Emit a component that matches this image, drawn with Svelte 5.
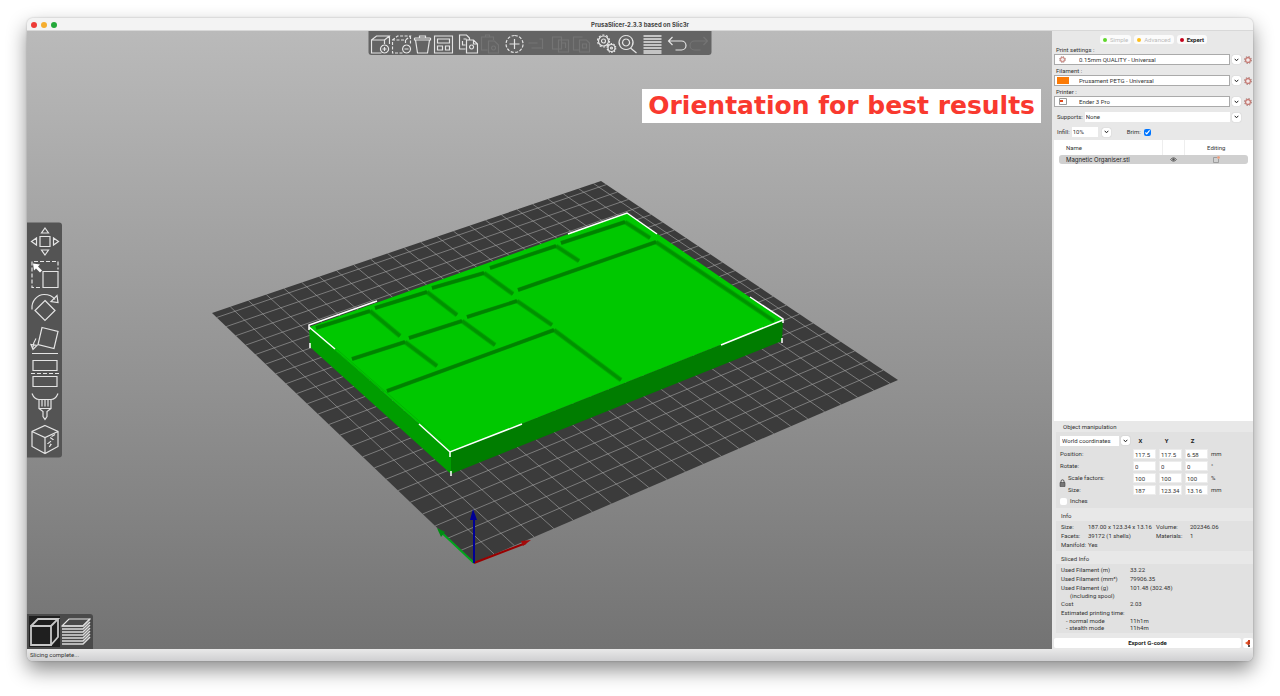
<script>
  const bed = [[474, 563], [898, 380], [601, 181], [212, 313]];

  // Projects a point of the unit square onto a quad seen in perspective.
  function projector([p0, p1, p2, p3]) {
    const dx1 = p1[0] - p2[0], dy1 = p1[1] - p2[1];
    const dx2 = p3[0] - p2[0], dy2 = p3[1] - p2[1];
    const sx = p0[0] - p1[0] + p2[0] - p3[0];
    const sy = p0[1] - p1[1] + p2[1] - p3[1];
    const det = dx1 * dy2 - dx2 * dy1;
    const g = (sx * dy2 - dx2 * sy) / det;
    const h = (dx1 * sy - sx * dy1) / det;
    return (u, v) => {
      const w = g * u + h * v + 1;
      const x = ((p1[0] - p0[0] + g * p1[0]) * u + (p3[0] - p0[0] + h * p3[0]) * v + p0[0]) / w;
      const y = ((p1[1] - p0[1] + g * p1[1]) * u + (p3[1] - p0[1] + h * p3[1]) * v + p0[1]) / w;
      return `${x.toFixed(1)} ${y.toFixed(1)}`;
    };
  }

  const at = projector(bed);
  let grid = '';
  for (let mm = 10; mm < 235; mm += 10) {
    const t = mm / 235;
    grid += `M${at(t, 0)}L${at(t, 1)}M${at(0, t)}L${at(1, t)}`;
  }

  // Each pocket: far wall start, far corner, right wall end.
  const pockets = [
    [[316, 328], [370, 311], [400, 336]],
    [[375, 308], [427, 292], [457, 315]],
    [[432, 288], [484, 273], [513, 294]],
    [[490, 268], [556, 246], [579, 261]],
    [[561, 243], [625, 222], [650, 238]],
    [[518, 290], [656, 242], [774, 321]],
    [[352, 359], [405, 342], [437, 366]],
    [[409, 338], [462, 321], [495, 345]],
    [[467, 317], [517, 301], [552, 325]],
    [[387, 391], [554, 330], [621, 380]]
  ];

  const presets = [
    { id: 'print', label: 'Print settings :', value: '0.15mm QUALITY - Universal', mark: 'gear' },
    { id: 'filament', label: 'Filament :', value: 'Prusament PETG - Universal', mark: 'swatch' },
    { id: 'printer', label: 'Printer :', value: 'Ender 3 Pro', mark: 'printer' }
  ];
  const modes = [
    { name: 'Simple', color: '#5fd62b' },
    { name: 'Advanced', color: '#fcbd1c' },
    { name: 'Expert', color: '#c4001b', on: true }
  ];
  const rows = [
    { name: 'Position:', values: ['117.5', '117.5', '6.58'], unit: 'mm' },
    { name: 'Rotate:', values: ['0', '0', '0'], unit: '°' },
    { name: 'Scale factors:', values: ['100', '100', '100'], unit: '%', inset: true },
    { name: 'Size:', values: ['187', '123.34', '13.16'], unit: 'mm', inset: true }
  ];

  const toolGroups = [
    [
      { name: 'Add', d: 'M11 19H1V6h13v4M1 6l5-4h13l-5 4M19 2v8M14 11a4 4 0 1 0 .1 0M14 13v4M12 15h4' },
      { name: 'Delete', d: 'M11 19H1V6h13v4M1 6l5-4h13l-5 4M19 2v8', dash: true, extra: 'M15 11a4 4 0 1 0 .1 0M13 15h4' },
      { name: 'Delete all', d: 'M2 4h16M7 4V2h6v2M3 6h14l-2 13H5L3 6M2 4v2h16V4' },
      { name: 'Arrange', d: 'M1 2h18v17H1zM4 5h12v4H4zM4 12h5v4H4zM12 12h4v4h-4z' }
    ],
    [
      { name: 'Copy', d: 'M11 6V4L8 1H1v14h6M5 5h3M4 7v4h3M8 6h7l4 4v9H8zM15 6v4h4M13 11a2 2 0 1 0 .1 0' },
      { name: 'Paste', d: 'M8 16H2V3h12v3M6 3V1h4v2M9 7h6l4 4v8H9zM14 12a2 2 0 1 0 .1 0', off: true }
    ],
    [
      { name: 'Add instance', d: 'M10 1.500a8.500 8.500 0 1 0 .1 0', dash: true, extra: 'M10 5v10M5 10h10' },
      { name: 'Remove instance', d: 'M3 9h9M6 14h10M14 5h3v10', off: true }
    ],
    [
      { name: 'Split to objects', d: 'M2 3h9v12H2zM8 6h10v12H8zM11 9h4v5', off: true },
      { name: 'Split to parts', d: 'M8 16H2V3h9M8 6h7l3 3v9H8zM11 10h4v4h-4z', off: true }
    ],
    [
      { name: 'Settings', gears: true },
      { name: 'Search', d: 'M8.500 1.500a7 7 0 1 0 .1 0M8.500 5a3.500 3.500 0 1 0 .1 0M13 14l6 5' }
    ],
    [{ name: 'Variable layer height', d: 'M1 2h18M1 5h18M1 8h18M1 11h18M1 14h18M1 17h18M1 19h18', heavy: true }],
    [
      { name: 'Undo', d: 'M5 3L1 7l4 4M1 7h13a4.500 4.500 0 0 1 0 9H8' },
      { name: 'Redo', d: 'M15 3l4 4-4 4M19 7H6a4.500 4.500 0 0 0 0 9h6', off: true }
    ]
  ];
  const gizmos = [
    { name: 'Move', d: 'M10 10h10v10H10zM15 1.500l3.500 5h-7zM15 28.500l3.500-5h-7zM1.500 15l5-3.500v7zM28.500 15l-5-3.500v7z' },
    { name: 'Scale', d: 'M13 12h15v16H13z', dashed: 'M10 28H2V2h26v8', fill: 'M3 4l7 1-2 2 4 4-2 2-4-4-2 2z' },
    { name: 'Rotate', d: 'M15 8l10 10-10 10L5 18zM2 17C1 8 8 2 14 2c5 0 9 2 11 5M27 3l1 7-7-1z' },
    { name: 'Place on face', d: 'M12 2l16 4-4 17-16-4zM6 13c-2 3-3 5-3 9M1 19l2 5 4-4zM2 28h26' },
    { name: 'Cut', d: 'M3 2h24v10H3zM3 18h24v10H3z', dashed: 'M1 15h28' },
    { name: 'Paint supports', d: 'M2 2c2 5 5 6 7 6h12c2 0 5-1 7-6M9 8v9h12V8M12 8v7M15 8v7M18 8v7M9 17l4 3v5l2 3 2-3v-5l4-3' },
    { name: 'Seam painting', d: 'M15 1l13 6v15l-13 7-13-7V7zM2 7l13 6 13-6M15 13v16', dashed: 'M25 10l-5 3 3 2-5 4 3 1-3 4' }
  ];
</script>

{#snippet gear(size)}
  <svg class="gear" width={size} height={size} viewBox="0 0 10 10" aria-hidden="true">
    <circle cx="5" cy="5" r="4.200" fill="none" stroke="#a87f7b" stroke-width="1.400" stroke-dasharray="1.800 1.500" />
    <circle cx="5" cy="5" r="3" fill="#f3eaea" stroke="#c4736c" stroke-width="1.400" />
  </svg>
{/snippet}

{#snippet chevron()}
  <span class="chevron" aria-hidden="true">
    <svg width="5" height="4" viewBox="0 0 5 4"><path d="M.7 .8l1.800 2L4.300 .8" fill="none" stroke="#222" /></svg>
  </span>
{/snippet}

<div class="desktop">
  <div class="window">
    <header>
      <div class="lights"><i class="red"></i><i class="amber"></i><i class="green"></i></div>
      <h1>PrusaSlicer-2.3.3 based on Slic3r</h1>
    </header>

    <main>
      <section class="canvas">
        <svg class="scene" viewBox="27 31 1025 618" role="img" aria-label="Magnetic Organiser on the print bed">
          <path d="M474 563L898 380L601 181L212 313Z" fill="#3b3b3b" />
          <path d={grid} fill="none" stroke="#a8a8a8" stroke-opacity="0.75" stroke-width="0.8" />

          <path d="M309 327L451 452L451 474L310 347Z" fill="#009d00" />
          <path d="M451 452L783 320L782 341L451 474Z" fill="#007d00" />
          <path d="M309 327L627 213L783 320L451 452Z" fill="#00c800" />
          {#each pockets as [a, b, c]}
            <path d="M{b}L{c}" stroke="#00ab00" stroke-width="5" />
            <path d="M{b}L{c}" stroke="#009200" stroke-width="3" />
            <path d="M{a}L{b}" stroke="#009800" stroke-width="4" />
            <path d="M{a}L{b}" stroke="#008200" stroke-width="3" />
          {/each}
          <path d="M324 338L450 448M384 392L322 339" stroke="#00b500" fill="none" />

          <g fill="none" stroke="#fff" stroke-width="1.500">
            <path d="M377 301L309 325V330M309 327L335 349M310 343V348" />
            <path d="M568 234L627 213L657 234" />
            <path d="M750 297L783 319V323M783 320L721 345M782 338V343" />
            <path d="M419 424L450 452L522 424M450 452V457M451 471V476" />
          </g>

          <g stroke-width="2" fill="none">
            <path d="M474 563L526 543" stroke="#990000" />
            <path d="M474 563L441 532" stroke="#00a51b" />
            <path d="M474 563V514" stroke="#000096" />
          </g>
          <path d="M531 540L521 541L523 546Z" fill="#a30a0a" />
          <path d="M437 528L445 532L441 537Z" fill="#008b12" />
          <path d="M473 509L470 520H477Z" fill="#000096" />
        </svg>

        <div class="toolbar">
          {#each toolGroups as group}
            <div class="group">
              {#each group as tool}
                <button class:off={tool.off} disabled={tool.off} aria-label={tool.name}>
                  <svg viewBox="0 0 20 20" width="20" height="20">
                    {#if tool.gears}
                      <circle cx="7" cy="7" r="5" />
                      <circle cx="7" cy="7" r="6" stroke-dasharray="2 1.770" />
                      <circle cx="7" cy="7" r="2" />
                      <circle cx="15" cy="14" r="3.500" />
                      <circle cx="15" cy="14" r="4.400" stroke-dasharray="1.500 1.260" />
                      <circle cx="15" cy="14" r="1" />
                    {:else}
                      <path d={tool.d} stroke-dasharray={tool.dash ? '3 1.500' : null} stroke-width={tool.heavy ? 1.7 : 1.2} />
                      {#if tool.extra}<path d={tool.extra} />{/if}
                    {/if}
                  </svg>
                </button>
              {/each}
            </div>
          {/each}
        </div>

        <div class="gizmos">
          {#each gizmos as gizmo}
            <button aria-label={gizmo.name}>
              <svg viewBox="0 0 30 30" width="30" height="30">
                <path d={gizmo.d} />
                {#if gizmo.dashed}<path d={gizmo.dashed} stroke-dasharray="4 2" />{/if}
                {#if gizmo.fill}<path d={gizmo.fill} fill="#fff" stroke="none" />{/if}
              </svg>
            </button>
          {/each}
        </div>

        <div class="views">
          <button class="picked" aria-label="3D editor view">
            <svg viewBox="0 0 30 30" width="30" height="30">
              <path d="M1 9h20v19H1zM1 9l7-7h20l-7 7M28 2v18l-7 8" stroke="#c8c8c8" stroke-width="1.800" />
            </svg>
          </button>
          <button aria-label="Preview">
            <svg viewBox="0 0 30 30" width="30" height="30">
              <path d="M1 9l7-7h21l-7 7z" />
              {#each [9, 12, 15, 18, 21, 24, 27] as y}
                <path d="M1 {y}h21l7-7" stroke="#ddd" stroke-width="1.500" />
              {/each}
            </svg>
          </button>
        </div>

        <p class="banner">Orientation for best results</p>
      </section>

      <aside>
        <div class="modes">
          {#each modes as mode}
            <button class:on={mode.on}><i style="background: {mode.color}"></i>{mode.name}</button>
          {/each}
        </div>

        {#each presets as preset}
          <div class="preset">
            <label for={preset.id}>{preset.label}</label>
            <div class="line">
              <div class="field">
                <span class="mark">
                  {#if preset.mark === 'gear'}
                    {@render gear(7)}
                  {:else if preset.mark === 'swatch'}
                    <i class="swatch"></i>
                  {:else}
                    <svg width="8" height="7" viewBox="0 0 8 7"><path d="M.5 .5h7v6h-7z" fill="#fff" stroke="#999" /><path d="M1 2h3v2H1z" fill="#e2491d" /></svg>
                  {/if}
                </span>
                <select id={preset.id}><option>{preset.value}</option></select>
              </div>
              {@render chevron()}
              <button class="plain" aria-label="Edit {preset.id} preset">{@render gear(8)}</button>
            </div>
          </div>
        {/each}

        <div class="supports">
          <label for="supports">Supports:</label>
          <select id="supports"><option>None</option></select>
          {@render chevron()}
        </div>
        <div class="infill">
          <label for="infill">Infill:</label>
          <select id="infill"><option>10%</option></select>
          {@render chevron()}
          <label class="brim">Brim: <input type="checkbox" checked /></label>
        </div>

        <div class="objects">
          <table>
            <thead><tr><th>Name</th><th aria-label="Visible"></th><th>Editing</th></tr></thead>
            <tbody>
              <tr>
                <td>Magnetic Organiser.stl</td>
                <td>
                  <svg width="7" height="5" viewBox="0 0 7 5"><path d="M.5 2.500Q3.500-1 6.500 2.500Q3.500 6 .5 2.500z" fill="none" stroke="#555" stroke-width=".8" /><circle cx="3.500" cy="2.500" r="1.200" fill="#555" /></svg>
                </td>
                <td>
                  <svg width="7" height="7" viewBox="0 0 7 7"><path d="M4 1.500H.5v5h5V3" fill="none" stroke="#999" stroke-width=".9" /><circle cx="5.500" cy="1.500" r="1.300" fill="#ee9a78" /></svg>
                </td>
              </tr>
            </tbody>
          </table>
        </div>

        <h2>Object manipulation</h2>
        <div class="box manipulation">
          <div class="coords">
            <select aria-label="Coordinates"><option>World coordinates</option></select>
            {@render chevron()}
          </div>
          <b>X</b><b>Y</b><b>Z</b><span></span>
          {#each rows as row}
            <span class:inset={row.inset}>{row.name}</span>
            {#each row.values as value, i}
              <input type="text" {value} aria-label="{row.name} {'XYZ'[i]}" />
            {/each}
            <span>{row.unit}</span>
          {/each}
          <svg class="lock" width="7" height="8" viewBox="0 0 7 8"><path d="M2 4V2.300a1.500 1.500 0 0 1 3 0V4" fill="none" stroke="#555" /><path d="M1 3.500h5v4H1z" fill="#777" stroke="#444" stroke-width=".6" /></svg>
          <label class="inches"><input type="checkbox" />Inches</label>
        </div>

        <h2 class="tight">Info</h2>
        <dl class="box info">
          <dt>Size:</dt><dd>187.00 x 123.34 x 13.16</dd><dt>Volume:</dt><dd>202346.06</dd>
          <dt>Facets:</dt><dd>39172 (1 shells)</dd><dt>Materials:</dt><dd>1</dd>
          <dt>Manifold:</dt><dd>Yes</dd>
        </dl>

        <h2 class="tight">Sliced Info</h2>
        <dl class="box sliced">
          <dt>Used Filament (m)</dt><dd>33.22</dd>
          <dt>Used Filament (mm³)</dt><dd>79906.35</dd>
          <dt>Used Filament (g)<span class="spool">(including spool)</span></dt><dd>101.48 (302.48)</dd>
          <dt>Cost</dt><dd>2.03</dd>
          <dt>Estimated printing time:<span>- normal mode</span><span>- stealth mode</span></dt>
          <dd class="times"><span>11h1m</span><span>11h4m</span></dd>
        </dl>

        <div class="export">
          <button>Export G-code</button>
          <button class="eject" aria-label="Export to SD card">
            <svg width="6" height="7" viewBox="0 0 6 7"><path d="M0 3l3-2v4z" fill="#e4572a" /><path d="M3 0h2v4l-2 2z" fill="#c53a1b" /><path d="M3 5h2v2H3z" fill="#555" /></svg>
          </button>
        </div>
      </aside>
    </main>

    <footer>Slicing complete...</footer>
  </div>
</div>

<style>
  :global(body) {
    margin: 0;
    background: #fff;
  }
  .desktop {
    box-sizing: border-box;
    min-height: 100vh;
    display: flex;
    padding: 18px 27px 35px;
    font: 6px/8px Roboto, "Liberation Sans", sans-serif;
    color: #333;
  }
  .desktop :global(*) {
    box-sizing: border-box;
  }
  .window {
    flex: 1;
    display: flex;
    flex-direction: column;
    border-radius: 6px;
    overflow: hidden;
    background: #e8e8e8;
    box-shadow: 0 0 2px rgba(0, 0, 0, 0.25), 0 9px 20px rgba(0, 0, 0, 0.45);
  }
  button, select, input {
    font: inherit;
    color: inherit;
    margin: 0;
    padding: 0;
    border: 0;
    background: none;
    min-width: 0;
    appearance: none;
  }
  h1, h2, p, dl, dd {
    margin: 0;
    font-size: 6px;
  }
  header {
    height: 13px;
    padding-top: 1px;
    display: grid;
    grid-template-columns: 1fr auto 1fr;
    align-items: center;
    background: #f3f3f3;
    border-bottom: 1px solid #d8d8d8;
  }
  .lights {
    display: flex;
    gap: 4px;
    padding-left: 4px;
  }
  .lights i {
    width: 6px;
    height: 6px;
    border-radius: 50%;
  }
  .red { background: #ed3b36; }
  .amber { background: #f5ad2e; }
  .green { background: #23a839; }
  h1 {
    font-family: Inter, sans-serif;
    font-weight: 700;
    color: #444;
  }
  main {
    flex: 1;
    display: flex;
  }
  .canvas {
    flex: 1;
    position: relative;
    background: linear-gradient(#bababa, #737373);
  }
  .scene {
    position: absolute;
    inset: 0;
    width: 100%;
    height: 100%;
  }
  .toolbar, .gizmos, .views {
    position: absolute;
    display: flex;
    background: #646464;
  }
  .toolbar button, .gizmos button, .views button {
    display: grid;
    place-items: center;
  }
  .canvas button svg {
    fill: none;
    stroke: #e4e4e4;
    stroke-width: 1.200;
  }
  .toolbar {
    top: 0;
    left: 50%;
    transform: translateX(-50%);
    height: 24px;
    padding: 1px 3px 0 2px;
    gap: 5px;
    border-radius: 0 0 3px 3px;
  }
  .group {
    display: flex;
    align-items: center;
    gap: 1px;
  }
  .off {
    opacity: 0.12;
  }
  .gizmos {
    left: 0;
    top: 50%;
    transform: translateY(-50%);
    flex-direction: column;
    padding: 2px;
    border-radius: 0 3px 3px 0;
    background: #545454;
  }
  .gizmos button {
    width: 31px;
    height: 33px;
  }
  .views {
    left: 0;
    bottom: 0;
    padding: 2px;
    border-radius: 0 3px 0 0;
    background: #4a4a4a;
  }
  .views button {
    width: 31px;
    height: 31px;
  }
  .views .picked {
    background: #1f1f1f;
  }
  .banner {
    position: absolute;
    top: 58px;
    right: 11px;
    padding: 0 6px;
    background: #fff;
    color: #f9392f;
    font: bold 25px/34px "DejaVu Sans", sans-serif;
  }
  aside {
    width: 201px;
    display: flex;
    flex-direction: column;
    padding: 4px 0 1px 2px;
  }
  .modes {
    display: flex;
    justify-content: center;
    gap: 3px;
    height: 10px;
  }
  .modes button {
    display: flex;
    align-items: center;
    gap: 3px;
    height: 9px;
    padding: 0 3px;
    border-radius: 3px;
    background: #fbfbfb;
    color: #bbb;
  }
  .modes .on {
    color: #222;
    font-weight: 700;
  }
  .modes i {
    width: 4px;
    height: 4px;
    border-radius: 50%;
  }
  .preset {
    height: 21px;
    display: flex;
    flex-direction: column;
  }
  .preset label {
    padding-left: 2px;
    line-height: 9px;
  }
  .line {
    display: flex;
    align-items: center;
    gap: 2px;
    padding-right: 1px;
  }
  .field {
    flex: 1;
    display: flex;
    align-items: center;
    height: 11px;
    border: 1px solid #aaa;
    background: #fff;
  }
  .field select {
    flex: 1;
  }
  .mark {
    width: 24px;
    display: flex;
    padding-left: 4px;
  }
  .swatch {
    width: 12px;
    height: 7px;
    margin-left: -2px;
    background: #fb7a05;
  }
  .chevron {
    width: 9px;
    height: 9px;
    display: grid;
    place-items: center;
    border-radius: 2px;
    background: #fff;
    box-shadow: 0 0 1px rgba(0, 0, 0, 0.3);
  }
  .gear {
    display: block;
  }
  .plain {
    width: 9px;
    display: grid;
    place-items: center;
  }
  .supports, .infill {
    display: flex;
    align-items: center;
    gap: 2px;
    height: 10px;
    margin-top: 4px;
    padding: 0 12px 0 3px;
  }
  .supports select {
    flex: 1;
    height: 10px;
    background: #fff;
    padding-left: 1px;
  }
  .infill {
    margin-top: 5px;
    padding-right: 0;
  }
  .infill select {
    width: 26px;
    height: 10px;
    margin-right: 2px;
    background: #fff;
    padding-left: 1px;
  }
  .brim {
    display: flex;
    align-items: center;
    gap: 3px;
    margin-left: 14px;
  }
  .brim input {
    appearance: auto;
    width: 7px;
    height: 7px;
  }
  .objects {
    flex: 1;
    margin-top: 3px;
    background: #fff;
    padding: 0 5px;
  }
  table {
    width: 100%;
    table-layout: fixed;
    border-collapse: collapse;
  }
  th, td {
    padding: 0;
    text-align: center;
    font-weight: 400;
  }
  th {
    height: 15px;
    border-right: 1px solid #eee;
  }
  th:last-child {
    border: 0;
  }
  th:first-child {
    width: 103px;
    text-align: left;
    padding-left: 7px;
  }
  th:nth-child(2) {
    width: 22px;
  }
  tbody tr {
    background: #d0d0d0;
  }
  td {
    height: 9px;
    line-height: 8px;
  }
  td:first-child {
    text-align: left;
    padding-left: 7px;
    border-radius: 3px 0 0 3px;
    font-family: Inter, sans-serif;
    color: #222;
  }
  td:last-child {
    border-radius: 0 3px 3px 0;
  }
  td svg {
    display: block;
    margin: auto;
  }
  h2 {
    padding: 2px 0 1px 9px;
    font-weight: 400;
  }
  .tight {
    padding: 2px 0 1px 7px;
  }
  .box {
    margin: 0 0 2px 2px;
    background: #e1e1e1;
  }
  .manipulation {
    position: relative;
    display: grid;
    grid-template-columns: 70px 23px 23px 23px auto;
    gap: 2px 3px;
    padding: 3px 3px 3px 4px;
    align-items: center;
  }
  .manipulation b {
    text-align: center;
    padding-right: 8px;
    color: #222;
  }
  .manipulation input[type="text"] {
    height: 10px;
    width: 100%;
    padding-left: 1px;
    background: #fff;
    border: 1px solid #ececec;
  }
  .coords {
    display: flex;
    align-items: center;
    gap: 2px;
    height: 11px;
    margin-bottom: 1px;
  }
  .coords select {
    width: 59px;
    height: 10px;
    padding-left: 2px;
    background: #fff;
  }
  .inset {
    padding-left: 8px;
  }
  .lock {
    position: absolute;
    left: 3px;
    top: 47px;
  }
  .inches {
    display: flex;
    align-items: center;
    gap: 3px;
  }
  .inches input {
    width: 7px;
    height: 7px;
    border-radius: 2px;
    background: #fff;
  }
  .info {
    display: grid;
    grid-template-columns: 27px 68px 34px auto;
    row-gap: 1px;
    padding: 2px 4px 2px 5px;
    white-space: nowrap;
  }
  .sliced {
    display: grid;
    grid-template-columns: 69px auto;
    row-gap: 1px;
    padding: 2px 4px 2px 5px;
    white-space: nowrap;
  }
  .sliced span {
    display: block;
    line-height: 7px;
    padding-left: 5px;
  }
  .sliced .spool {
    padding-left: 9px;
  }
  .sliced .times {
    padding-top: 8px;
  }
  .times span {
    padding-left: 0;
  }
  .export {
    display: flex;
    gap: 2px;
    margin-top: 3px;
  }
  .export button {
    flex: 1;
    height: 10px;
    border-radius: 2px;
    background: #fff;
    color: #222;
    font-weight: 700;
  }
  .export .eject {
    flex: none;
    width: 10px;
    display: grid;
    place-items: center;
  }
  footer {
    height: 12px;
    padding: 2px 3px;
    background: linear-gradient(#e9e9e9, #cfcfd1);
  }
</style>
